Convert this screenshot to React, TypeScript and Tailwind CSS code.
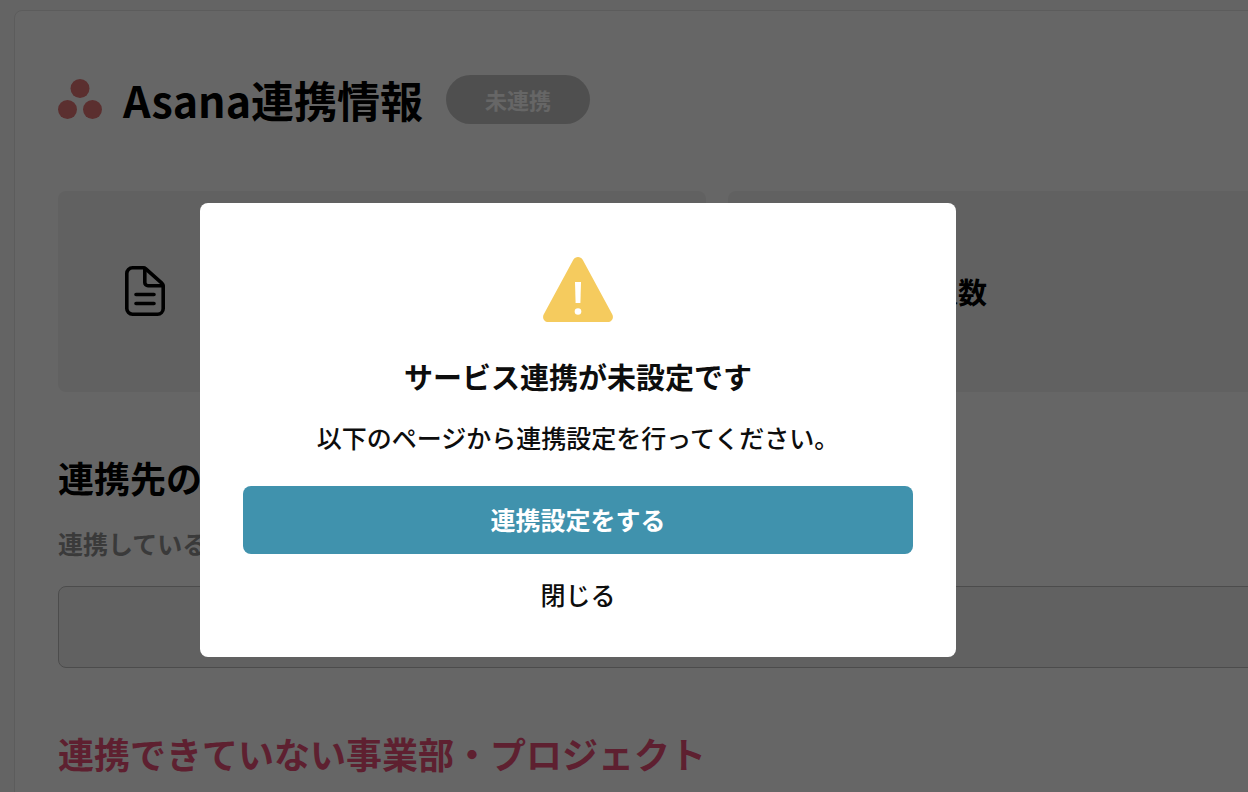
import { ReactNode, useState } from 'react';

function AsanaIcon() {
  return (
    <svg width="44" height="40" viewBox="0 0 44 40" fill="#e37676" aria-hidden="true">
      <circle cx="22" cy="9.5" r="9.5" />
      <circle cx="9.5" cy="30.5" r="9.5" />
      <circle cx="34.5" cy="30.5" r="9.5" />
    </svg>
  );
}

function DocumentIcon() {
  return (
    <svg
      width="40"
      height="51"
      viewBox="0 0 40 51"
      fill="none"
      stroke="black"
      strokeWidth="3.6"
      strokeLinecap="round"
      strokeLinejoin="round"
      aria-hidden="true"
    >
      <path d="M7.5 1.8H18.2C19.2 1.8 20.1 2.2 20.8 2.8L36.8 17.2C37.7 18 38.2 19 38.2 20.2V42.5C38.2 45.7 35.7 48.2 32.5 48.2H7.5C4.3 48.2 1.8 45.7 1.8 42.5V7.5C1.8 4.3 4.3 1.8 7.5 1.8Z" />
      <path d="M19.8 2.5V16.5C19.8 18.3 21.2 19.7 23 19.7H38" />
      <path d="M11 28.5H29M11 37.5H29" />
    </svg>
  );
}

function WarningIcon() {
  return (
    <svg width="70" height="65" viewBox="0 0 70 65" aria-hidden="true">
      <path
        d="M30.3 2.7C32.4 -0.9 37.6 -0.9 39.7 2.7L69.2 57.2C71.2 60.8 68.8 65 64.8 65H5.2C1.2 65 -1.2 60.8 0.8 57.2Z"
        fill="#f5cb5e"
      />
      <path d="M32 25H38L37.4 46H32.6Z" fill="white" />
      <circle cx="35" cy="54.5" r="3.3" fill="white" />
    </svg>
  );
}

function InfoTile({ icon, label }: { icon?: ReactNode; label?: string }) {
  return (
    <div className="flex h-[201px] items-center rounded-lg bg-[#f2f2f2] px-[67px]">
      {icon}
      {label && <p className="ml-auto mr-[322px] text-[29px] font-bold">{label}</p>}
    </div>
  );
}

export default function App() {
  const [open, setOpen] = useState(true);

  return (
    <div className="h-screen overflow-hidden bg-[#fafafa] pl-[14px] pt-[10px] font-['Noto_Sans_CJK_JP',sans-serif] text-black">
      <main className="-mr-[172px] rounded-lg border border-[#e6e6e6] bg-white px-[43px] pb-16 pt-[58px]">
        <div className="flex items-center">
          <AsanaIcon />
          <h1 className="ml-[21px] text-[43px] leading-[60px] font-bold">Asana連携情報</h1>
          <span className="ml-[23px] rounded-full bg-[#c6c6c6] px-[39px] text-[22px] leading-[49px] font-bold text-white">
            未連携
          </span>
        </div>

        <div className="mt-[62px] grid grid-cols-2 gap-[22px]">
          <InfoTile icon={<DocumentIcon />} />
          <InfoTile label="人数" />
        </div>

        <h2 className="mt-[58px] text-4xl leading-[54px] font-bold">連携先の</h2>
        <label htmlFor="project" className="mt-5 block text-[25px] leading-[38px] font-bold text-[#929292]">
          連携している
        </label>
        <input
          id="project"
          type="text"
          className="mt-6 h-[82px] w-full rounded-lg border border-[#bebebe] bg-[#f2f2f2] px-6 text-[25px]"
        />

        <h2 className="mt-[58px] text-4xl leading-[54px] font-bold text-[#eb5278]">
          連携できていない事業部・プロジェクト
        </h2>
      </main>

      {open && (
        <div className="fixed inset-0 flex items-start justify-center bg-black/60 pr-[92px] pt-[203px]">
          <div
            role="dialog"
            aria-modal="true"
            aria-labelledby="dialog-title"
            className="flex w-[756px] flex-col items-center rounded-lg bg-white px-[43px] pb-11 pt-[54px] text-[#0d0d0d]"
          >
            <WarningIcon />
            <h3 id="dialog-title" className="mt-8 text-[29px] leading-[44px] font-bold">
              サービス連携が未設定です
            </h3>
            <p className="mt-5 text-[25px] leading-[38px] font-medium">
              以下のページから連携設定を行ってください。
            </p>
            <button
              type="button"
              className="mt-[30px] h-[68px] w-full rounded-lg bg-[#4092ad] text-[25px] font-bold text-white"
            >
              連携設定をする
            </button>
            <button
              type="button"
              onClick={() => setOpen(false)}
              className="mt-[21px] px-6 text-[25px] leading-[38px] font-medium"
            >
              閉じる
            </button>
          </div>
        </div>
      )}
    </div>
  );
}
